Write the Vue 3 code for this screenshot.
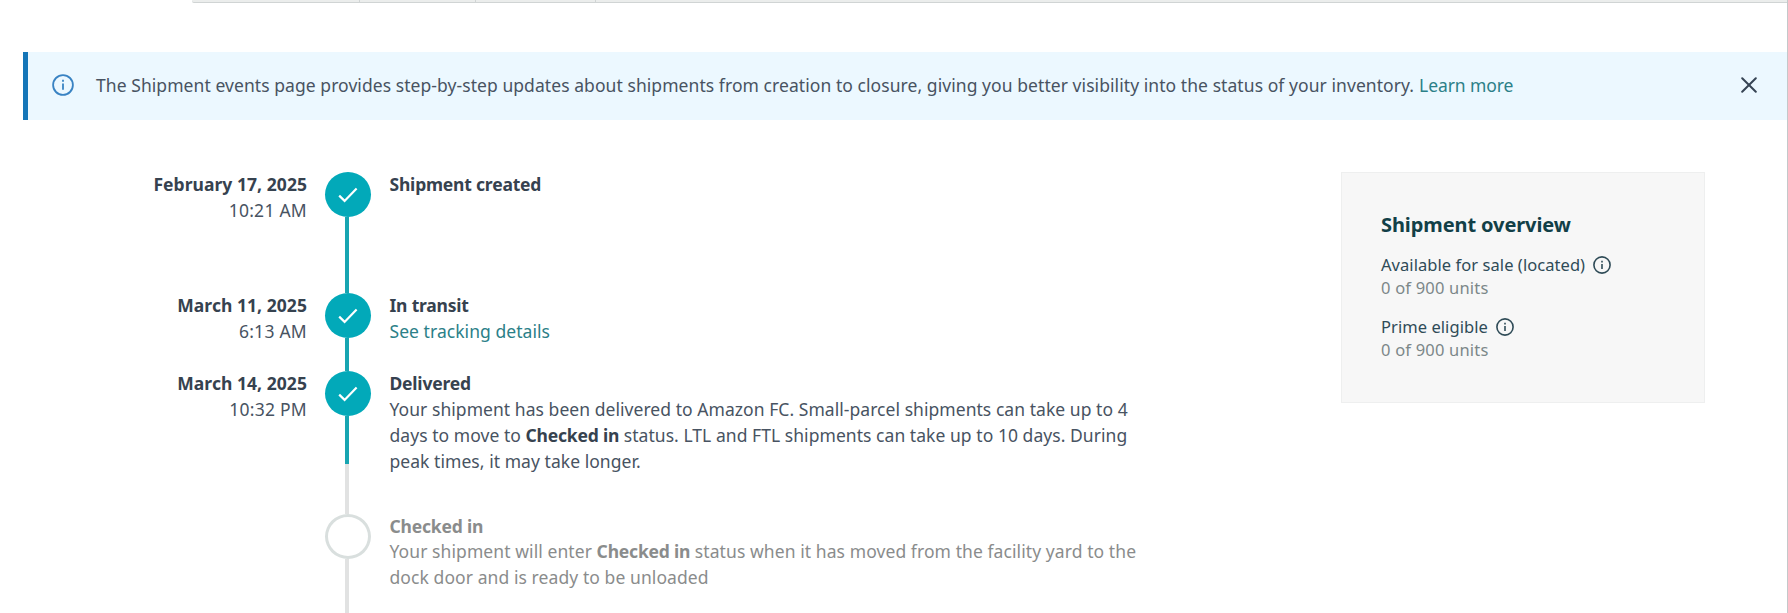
<template>
  <div class="page">
    <div class="tab-strip">
      <span class="tab tab-first"></span>
      <span class="tab tab-second"></span>
      <span class="tab tab-third"></span>
    </div>

    <div class="banner">
      <svg class="banner-icon" viewBox="0 0 22 22">
        <circle cx="11" cy="11" r="9.9" />
        <path d="M11 9.6v6.2" />
        <path d="M11 5.8v1.9" />
      </svg>
      <p class="banner-text">
        <span class="banner-message">The Shipment events page provides step-by-step updates about shipments from creation to closure, giving you better visibility into the status of your inventory.</span>
        <a class="link">Learn more</a>
      </p>
      <button type="button" class="close-btn" aria-label="Close">
        <svg viewBox="0 0 16 16">
          <path d="M1.2 1.2l13.6 13.6M14.8 1.2L1.2 14.8" />
        </svg>
      </button>
    </div>

    <div class="content">
      <ol class="timeline">
        <li v-for="event in events" :key="event.title" :class="['event', event.status]">
          <div class="event-date">
            <strong>{{ event.date }}</strong>
            <span class="event-time">{{ event.time }}</span>
          </div>
          <div class="event-track">
            <span class="marker">
              <svg v-if="event.status !== 'pending'" viewBox="0 0 20 16">
                <path d="M1.2 8.6l5.4 5.3L18.6 1.6" />
              </svg>
            </span>
            <span class="line"></span>
          </div>
          <div class="event-body">
            <strong class="event-title">{{ event.title }}</strong>
            <a v-if="event.link" class="link">{{ event.link }}</a>
            <p v-for="(line, i) in event.lines" :key="i" class="event-line">
              <template v-for="(part, j) in line" :key="j">
                <strong v-if="part.bold">{{ part.text }}</strong>
                <template v-else>{{ part.text }}</template>
              </template>
            </p>
          </div>
        </li>
      </ol>

      <aside class="overview">
        <h2>Shipment overview</h2>
        <div v-for="stat in stats" :key="stat.label" class="stat">
          <div class="stat-label">
            <span>{{ stat.label }}</span>
            <svg viewBox="0 0 18 18">
              <circle cx="9" cy="9" r="8.1" />
              <path d="M9 8v5" />
              <path d="M9 4.8v1.6" />
            </svg>
          </div>
          <div class="stat-value">{{ stat.value }}</div>
        </div>
      </aside>
    </div>
  </div>
</template>

<script setup>
const events = [
  { title: 'Shipment created', date: 'February 17, 2025', time: '10:21 AM', status: 'created' },
  { title: 'In transit', date: 'March 11, 2025', time: '6:13 AM', status: 'transit', link: 'See tracking details' },
  {
    title: 'Delivered',
    date: 'March 14, 2025',
    time: '10:32 PM',
    status: 'delivered',
    lines: [
      [{ text: 'Your shipment has been delivered to Amazon FC. Small-parcel shipments can take up to 4' }],
      [
        { text: 'days to move to ' },
        { text: 'Checked in', bold: true },
        { text: ' status. LTL and FTL shipments can take up to 10 days. During' }
      ],
      [{ text: 'peak times, it may take longer.' }]
    ]
  },
  {
    title: 'Checked in',
    status: 'pending',
    lines: [
      [
        { text: 'Your shipment will enter ' },
        { text: 'Checked in', bold: true },
        { text: ' status when it has moved from the facility yard to the' }
      ],
      [{ text: 'dock door and is ready to be unloaded' }]
    ]
  }
]

const stats = [
  { label: 'Available for sale (located)', value: '0 of 900 units' },
  { label: 'Prime eligible', value: '0 of 900 units' }
]
</script>

<style>
body {
  margin: 0;
  background: #fff;
  overflow: hidden;
}
</style>

<style scoped>
.page {
  box-sizing: border-box;
  height: 613px;
  overflow: hidden;
  border-right: 1px solid #c4c8ca;
  font-family: 'Noto Sans', 'Open Sans', sans-serif;
  font-size: 17.5px;
  line-height: 26px;
  letter-spacing: 0.05px;
  color: #485362;
}

.tab-strip {
  display: flex;
  box-sizing: border-box;
  height: 3px;
  margin-left: 192px;
  background: #ebedec;
  border-bottom: 1px solid #d0d4d4;
  border-bottom-left-radius: 2px;
}

.tab {
  box-sizing: border-box;
  border-right: 1px solid #d0d4d4;
}

.tab-first {
  width: 168px;
}

.tab-second {
  width: 116px;
}

.tab-third {
  width: 120px;
}

.banner {
  display: flex;
  align-items: center;
  box-sizing: border-box;
  height: 68px;
  margin: 49px 0 0 23px;
  padding: 0 30px 2px 24px;
  border-left: 5px solid #1476b8;
  background: #ecf8ff;
}

.banner-icon {
  width: 22px;
  height: 22px;
  fill: none;
  stroke: #3983c3;
  stroke-width: 1.8;
}

.banner-text {
  display: flex;
  flex: 1;
  gap: 5px;
  margin: 0 0 0 22px;
  letter-spacing: 0.065px;
  white-space: nowrap;
}

.link {
  color: #2b8088;
  text-decoration: none;
}

.banner-text .link {
  letter-spacing: -0.1px;
}

.close-btn {
  display: flex;
  padding: 0;
  border: none;
  background: none;
  cursor: pointer;
}

.close-btn svg {
  width: 16px;
  height: 16px;
  fill: none;
  stroke: #364454;
  stroke-width: 2;
  stroke-linecap: round;
}

.content {
  display: flex;
  align-items: flex-start;
  justify-content: space-between;
  padding: 52px 82px 0 0;
}

.timeline {
  margin: 0;
  padding: 0;
  list-style: none;
}

.event {
  display: flex;
}

.event.created {
  height: 121px;
}

.event.transit {
  height: 78px;
}

.event.delivered {
  height: 143px;
}

.event.pending {
  height: 120px;
}

.event-date {
  display: flex;
  flex-direction: column;
  width: 307px;
  margin-top: -1px;
  text-align: right;
  white-space: nowrap;
}

strong {
  font-weight: 700;
  letter-spacing: -0.2px;
  color: #36424f;
}

.event-date strong {
  letter-spacing: 0.05px;
}

.event-time {
  letter-spacing: 0.25px;
}

.event-track {
  display: flex;
  flex-direction: column;
  align-items: center;
  width: 46px;
  margin: 0 18.5px 0 18px;
}

.marker {
  display: flex;
  align-items: center;
  justify-content: center;
  box-sizing: border-box;
  width: 46px;
  height: 45px;
  flex-shrink: 0;
  border-radius: 50%;
  background: #02a9b9;
}

.marker svg {
  width: 20px;
  height: 16px;
  fill: none;
  stroke: #fff;
  stroke-width: 2.2;
}

.line {
  flex: 1;
  width: 4px;
  margin-right: 2px;
  background: #17a5b1;
}

.delivered .line {
  background: linear-gradient(#17a5b1 48px, #e1e2e2 48px);
}

.pending .marker {
  border: 3px solid #d9dfde;
  background: #fff;
}

.pending .line {
  background: #e1e2e2;
}

.event-body {
  display: flex;
  flex-direction: column;
  margin-top: -1px;
  white-space: nowrap;
}

.event-line {
  margin: 0;
}

.pending .event-body {
  margin-top: 0;
  letter-spacing: 0.08px;
}

.pending .event-body,
.pending strong {
  color: #8a8c8c;
}

.pending .event-title {
  margin-bottom: -1px;
  line-height: 25px;
}

.overview {
  box-sizing: border-box;
  width: 364px;
  height: 231px;
  padding: 38px 39px;
  border: 1px solid #eeefef;
  background: #f7f7f7;
  font-size: 16.5px;
  line-height: 23px;
}

.overview h2 {
  margin: 0 0 14px;
  font-size: 20px;
  font-weight: 700;
  line-height: 28px;
  letter-spacing: -0.1px;
  color: #123f47;
}

.stat {
  margin-bottom: 16px;
}

.stat-label {
  display: flex;
  align-items: center;
  letter-spacing: 0.06px;
  color: #2f4b57;
}

.stat-label svg {
  width: 18px;
  height: 18px;
  margin-left: 8px;
  fill: none;
  stroke: #2f4b57;
  stroke-width: 1.6;
}

.stat-value {
  letter-spacing: 0.2px;
  color: #7c8789;
}
</style>
